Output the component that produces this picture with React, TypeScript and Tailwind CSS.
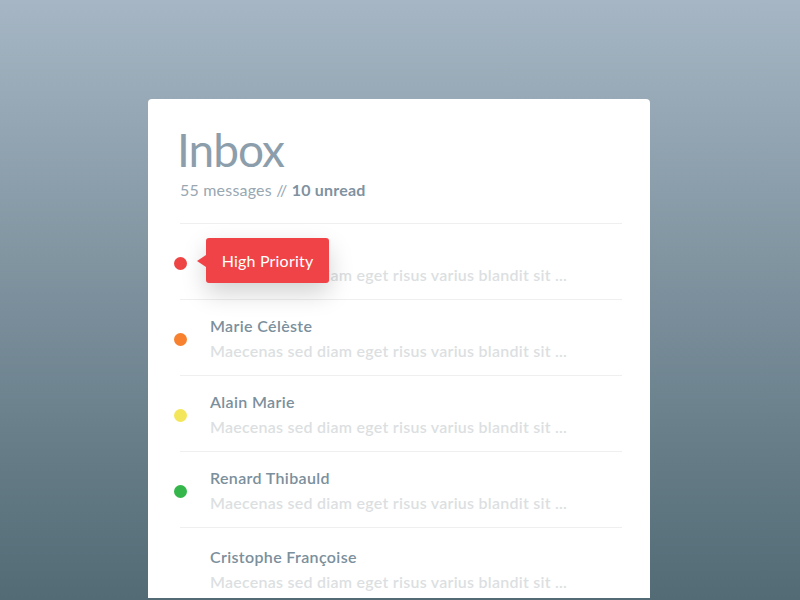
import React from "react";

const rows = [
  { name: "Jean Dupont", color: "#ef4444", tip: true },
  { name: "Marie Célèste", color: "#f7812f" },
  { name: "Alain Marie", color: "#f4e65a" },
  { name: "Renard Thibauld", color: "#35b64a" },
  { name: "Cristophe Françoise", color: null },
];

export default function App() {
  return (
    <div
      className="w-[800px] h-[600px] overflow-hidden pt-[99px] pl-[148px] flex flex-col bg-gradient-to-b from-[#a6b6c4] to-[#526b75]"
      style={{ fontFamily: "Lato, 'Open Sans', sans-serif" }}
    >
      <div className="w-[502px] h-[499px] bg-white rounded-t-[4px] pl-[32px] pr-[28px] pt-[22px] overflow-hidden">
        <h1 className="text-[46px] leading-[58px] text-[#8c9eab] font-normal tracking-[-1px] -ml-[3px]">Inbox</h1>
        <p className="text-[16px] leading-[20px] text-[#98a7b2] mt-[1px] tracking-[0.2px]">
          55 messages // <span className="font-bold text-[#7f929f]">10 unread</span>
        </p>
        <div className="mt-[23px] border-t border-[#eeeff0]">
          {rows.map((r, i) => (
            <div key={i} className={`relative flex items-center border-b border-[#eeeff0] h-[76px] ${i === 4 ? "pt-[6px]" : ""}`}>
              <div className="w-[13px] h-[13px] -ml-[6px] mt-[4px] shrink-0 rounded-full" style={{ backgroundColor: r.color ?? "transparent" }} />
              <div className="ml-[23px] flex flex-col">
                <span className="text-[16px] leading-[25px] font-semibold text-[#7b8f9c] tracking-[0.35px]">{r.name}</span>
                <span className="text-[16px] leading-[25px] font-semibold text-[#dcdfe2] tracking-[0.25px]">
                  Maecenas sed diam eget risus varius blandit sit ...
                </span>
              </div>
              {r.tip && (
                <div className="absolute left-[26px] top-[14px] h-[45px] w-[123px] bg-[#f04347] rounded-[3px] flex items-center justify-center shadow-[0_10px_25px_rgba(0,0,0,0.18)]">
                  <div className="absolute -left-[9px] top-[17px] w-0 h-0 border-y-[6px] border-y-transparent border-r-[9px] border-r-[#f04347]" />
                  <span className="text-white text-[16px] tracking-[0.2px]">High Priority</span>
                </div>
              )}
            </div>
          ))}
        </div>
      </div>
    </div>
  );
}
